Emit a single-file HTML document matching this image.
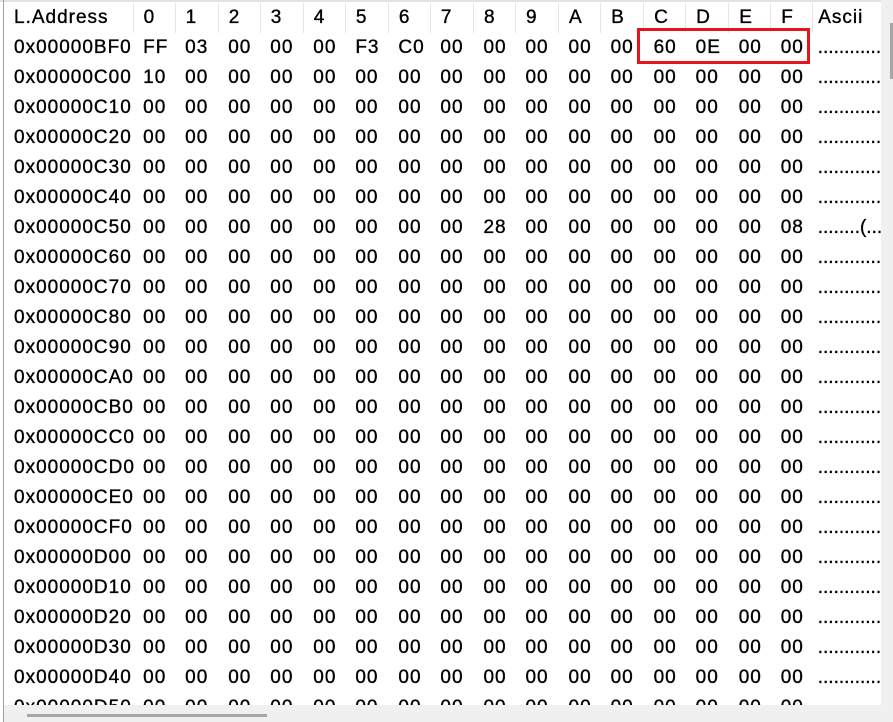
<!DOCTYPE html>
<html><head><meta charset="utf-8"><style>
html,body{margin:0;padding:0;background:#fff;}
body{width:893px;height:722px;position:relative;overflow:hidden;font-family:"Liberation Sans",Arial,sans-serif;font-size:19px;letter-spacing:1px;color:#000;-webkit-text-stroke:0.35px #000;}
#top{position:absolute;left:0;top:0;width:881px;height:2px;background:#e3e3e3;}
#left{position:absolute;left:3px;top:0;width:1px;height:722px;background:#a0a0a0;}
#wrap{position:absolute;left:4px;top:3px;width:877px;height:702px;overflow:hidden;}
table{border-collapse:collapse;table-layout:fixed;width:900px;}
td{padding:0 0 0 10px;height:30px;line-height:30px;white-space:nowrap;overflow:visible;}
td.a{padding-left:10px;}
td.s{padding-left:5px;overflow:hidden;letter-spacing:0;}
tr.h td{height:30px;line-height:30px;border-right:1px solid #e5e5e5;}
#vs{position:absolute;left:881px;top:0;width:12px;height:722px;background:#f0f0f0;}
#vt{position:absolute;left:890px;top:23px;width:3px;height:56px;background:#a6a6a6;}
#hs{position:absolute;left:4px;top:705px;width:877px;height:17px;background:#f0f0f0;}
#ht{position:absolute;left:27px;top:714px;width:240px;height:3px;background:#a6a6a6;}
#red{position:absolute;left:637px;top:28px;width:167px;height:30px;border:3px solid #e8141c;}
</style></head><body>
<div id="top"></div>
<div id="wrap">
<table>
<colgroup><col style="width:129px"><col style="width:42px"><col style="width:43px"><col style="width:42px"><col style="width:43px"><col style="width:42px"><col style="width:43px"><col style="width:42px"><col style="width:43px"><col style="width:42px"><col style="width:43px"><col style="width:42px"><col style="width:43px"><col style="width:42px"><col style="width:43px"><col style="width:42px"><col style="width:42px"><col style="width:91px"></colgroup>
<tr class="h"><td class="a">L.Address</td><td>0</td><td>1</td><td>2</td><td>3</td><td>4</td><td>5</td><td>6</td><td>7</td><td>8</td><td>9</td><td>A</td><td>B</td><td>C</td><td>D</td><td>E</td><td>F</td><td class="s" style="border-right:none;letter-spacing:1px">Ascii</td></tr>
<tr><td class="a">0x00000BF0</td><td>FF</td><td>03</td><td>00</td><td>00</td><td>00</td><td>F3</td><td>C0</td><td>00</td><td>00</td><td>00</td><td>00</td><td>00</td><td>60</td><td>0E</td><td>00</td><td>00</td><td class="s">............`...</td></tr>
<tr><td class="a">0x00000C00</td><td>10</td><td>00</td><td>00</td><td>00</td><td>00</td><td>00</td><td>00</td><td>00</td><td>00</td><td>00</td><td>00</td><td>00</td><td>00</td><td>00</td><td>00</td><td>00</td><td class="s">................</td></tr>
<tr><td class="a">0x00000C10</td><td>00</td><td>00</td><td>00</td><td>00</td><td>00</td><td>00</td><td>00</td><td>00</td><td>00</td><td>00</td><td>00</td><td>00</td><td>00</td><td>00</td><td>00</td><td>00</td><td class="s">................</td></tr>
<tr><td class="a">0x00000C20</td><td>00</td><td>00</td><td>00</td><td>00</td><td>00</td><td>00</td><td>00</td><td>00</td><td>00</td><td>00</td><td>00</td><td>00</td><td>00</td><td>00</td><td>00</td><td>00</td><td class="s">................</td></tr>
<tr><td class="a">0x00000C30</td><td>00</td><td>00</td><td>00</td><td>00</td><td>00</td><td>00</td><td>00</td><td>00</td><td>00</td><td>00</td><td>00</td><td>00</td><td>00</td><td>00</td><td>00</td><td>00</td><td class="s">................</td></tr>
<tr><td class="a">0x00000C40</td><td>00</td><td>00</td><td>00</td><td>00</td><td>00</td><td>00</td><td>00</td><td>00</td><td>00</td><td>00</td><td>00</td><td>00</td><td>00</td><td>00</td><td>00</td><td>00</td><td class="s">................</td></tr>
<tr><td class="a">0x00000C50</td><td>00</td><td>00</td><td>00</td><td>00</td><td>00</td><td>00</td><td>00</td><td>00</td><td>28</td><td>00</td><td>00</td><td>00</td><td>00</td><td>00</td><td>00</td><td>08</td><td class="s">........(.......</td></tr>
<tr><td class="a">0x00000C60</td><td>00</td><td>00</td><td>00</td><td>00</td><td>00</td><td>00</td><td>00</td><td>00</td><td>00</td><td>00</td><td>00</td><td>00</td><td>00</td><td>00</td><td>00</td><td>00</td><td class="s">................</td></tr>
<tr><td class="a">0x00000C70</td><td>00</td><td>00</td><td>00</td><td>00</td><td>00</td><td>00</td><td>00</td><td>00</td><td>00</td><td>00</td><td>00</td><td>00</td><td>00</td><td>00</td><td>00</td><td>00</td><td class="s">................</td></tr>
<tr><td class="a">0x00000C80</td><td>00</td><td>00</td><td>00</td><td>00</td><td>00</td><td>00</td><td>00</td><td>00</td><td>00</td><td>00</td><td>00</td><td>00</td><td>00</td><td>00</td><td>00</td><td>00</td><td class="s">................</td></tr>
<tr><td class="a">0x00000C90</td><td>00</td><td>00</td><td>00</td><td>00</td><td>00</td><td>00</td><td>00</td><td>00</td><td>00</td><td>00</td><td>00</td><td>00</td><td>00</td><td>00</td><td>00</td><td>00</td><td class="s">................</td></tr>
<tr><td class="a">0x00000CA0</td><td>00</td><td>00</td><td>00</td><td>00</td><td>00</td><td>00</td><td>00</td><td>00</td><td>00</td><td>00</td><td>00</td><td>00</td><td>00</td><td>00</td><td>00</td><td>00</td><td class="s">................</td></tr>
<tr><td class="a">0x00000CB0</td><td>00</td><td>00</td><td>00</td><td>00</td><td>00</td><td>00</td><td>00</td><td>00</td><td>00</td><td>00</td><td>00</td><td>00</td><td>00</td><td>00</td><td>00</td><td>00</td><td class="s">................</td></tr>
<tr><td class="a">0x00000CC0</td><td>00</td><td>00</td><td>00</td><td>00</td><td>00</td><td>00</td><td>00</td><td>00</td><td>00</td><td>00</td><td>00</td><td>00</td><td>00</td><td>00</td><td>00</td><td>00</td><td class="s">................</td></tr>
<tr><td class="a">0x00000CD0</td><td>00</td><td>00</td><td>00</td><td>00</td><td>00</td><td>00</td><td>00</td><td>00</td><td>00</td><td>00</td><td>00</td><td>00</td><td>00</td><td>00</td><td>00</td><td>00</td><td class="s">................</td></tr>
<tr><td class="a">0x00000CE0</td><td>00</td><td>00</td><td>00</td><td>00</td><td>00</td><td>00</td><td>00</td><td>00</td><td>00</td><td>00</td><td>00</td><td>00</td><td>00</td><td>00</td><td>00</td><td>00</td><td class="s">................</td></tr>
<tr><td class="a">0x00000CF0</td><td>00</td><td>00</td><td>00</td><td>00</td><td>00</td><td>00</td><td>00</td><td>00</td><td>00</td><td>00</td><td>00</td><td>00</td><td>00</td><td>00</td><td>00</td><td>00</td><td class="s">................</td></tr>
<tr><td class="a">0x00000D00</td><td>00</td><td>00</td><td>00</td><td>00</td><td>00</td><td>00</td><td>00</td><td>00</td><td>00</td><td>00</td><td>00</td><td>00</td><td>00</td><td>00</td><td>00</td><td>00</td><td class="s">................</td></tr>
<tr><td class="a">0x00000D10</td><td>00</td><td>00</td><td>00</td><td>00</td><td>00</td><td>00</td><td>00</td><td>00</td><td>00</td><td>00</td><td>00</td><td>00</td><td>00</td><td>00</td><td>00</td><td>00</td><td class="s">................</td></tr>
<tr><td class="a">0x00000D20</td><td>00</td><td>00</td><td>00</td><td>00</td><td>00</td><td>00</td><td>00</td><td>00</td><td>00</td><td>00</td><td>00</td><td>00</td><td>00</td><td>00</td><td>00</td><td>00</td><td class="s">................</td></tr>
<tr><td class="a">0x00000D30</td><td>00</td><td>00</td><td>00</td><td>00</td><td>00</td><td>00</td><td>00</td><td>00</td><td>00</td><td>00</td><td>00</td><td>00</td><td>00</td><td>00</td><td>00</td><td>00</td><td class="s">................</td></tr>
<tr><td class="a">0x00000D40</td><td>00</td><td>00</td><td>00</td><td>00</td><td>00</td><td>00</td><td>00</td><td>00</td><td>00</td><td>00</td><td>00</td><td>00</td><td>00</td><td>00</td><td>00</td><td>00</td><td class="s">................</td></tr>
<tr><td class="a">0x00000D50</td><td>00</td><td>00</td><td>00</td><td>00</td><td>00</td><td>00</td><td>00</td><td>00</td><td>00</td><td>00</td><td>00</td><td>00</td><td>00</td><td>00</td><td>00</td><td>00</td><td class="s">................</td></tr>
</table>
</div>
<div id="left"></div>
<div id="red"></div>
<div id="vs"></div><div id="vt"></div>
<div id="hs"></div><div id="ht"></div>
</body></html>
